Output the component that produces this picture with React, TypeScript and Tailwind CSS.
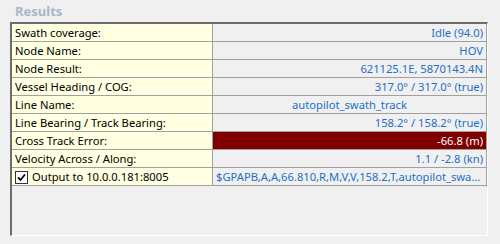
import React from "react";

type Row = {
  label: string;
  value: string;
  align?: "right" | "center" | "left";
  alert?: boolean;
  check?: boolean;
};

const rows: Row[] = [
  { label: "Swath coverage:", value: "Idle (94.0)" },
  { label: "Node Name:", value: "HOV" },
  { label: "Node Result:", value: "621125.1E, 5870143.4N" },
  { label: "Vessel Heading / COG:", value: "317.0° / 317.0° (true)" },
  { label: "Line Name:", value: "autopilot_swath_track", align: "center" },
  { label: "Line Bearing / Track Bearing:", value: "158.2° / 158.2° (true)" },
  { label: "Cross Track Error:", value: "-66.8 (m)", alert: true },
  { label: "Velocity Across / Along:", value: "1.1 / -2.8 (kn)" },
  {
    label: "Output to 10.0.0.181:8005",
    value: "$GPAPB,A,A,66.810,R,M,V,V,158.2,T,autopilot_swath_track,158.2,T,158.2,T*3C",
    align: "left",
    check: true,
  },
];

const Checkbox = () => (
  <span className="mr-[4px] flex h-[13px] w-[13px] shrink-0 items-center justify-center border border-[#333] bg-white">
    <svg width="9" height="9" viewBox="0 0 9 9">
      <path d="M1 4.5 L3.5 7 L8 1.5" stroke="#000" strokeWidth="1.8" fill="none" />
    </svg>
  </span>
);

const App = () => {
  return (
    <div
      className="h-[244px] w-[500px] overflow-hidden bg-[#f0f0f0] text-[11.2px]"
      style={{ fontFamily: '"Noto Sans", "Open Sans", sans-serif' }}
    >
      <div className="pl-[15px] pt-[3px] text-[13px] font-bold leading-[17px] text-[#a8b6ca]">
        Results
      </div>

      {/* 결과 그리드 */}
      <div className="ml-[10px] mt-[2px] h-[214px] w-[478px] border-b border-l-2 border-r border-t-2 border-b-white border-l-[#6d6d6d] border-r-white border-t-[#6d6d6d]">
        <div className="grid grid-cols-[201px_274px]">
          {rows.map((r) => (
            <React.Fragment key={r.label}>
              <div className="flex h-[18px] items-center overflow-hidden whitespace-nowrap border-b border-r border-[#a0a0a0] bg-[#ffffe1] pl-[3px] pt-[1px] leading-[16px] text-black">
                {r.check && <Checkbox />}
                {r.label}
              </div>
              <div
                className={
                  "h-[18px] overflow-hidden text-ellipsis whitespace-nowrap border-b border-r border-[#a0a0a0] px-[3px] pt-[1px] leading-[16px] " +
                  (r.alert ? "bg-[#800000] text-white " : "bg-[#f0f0f0] text-[#1e6fc8] ") +
                  (r.align === "center" ? "text-center" : r.align === "left" ? "text-left" : "text-right")
                }
              >
                {r.value}
              </div>
            </React.Fragment>
          ))}
        </div>
      </div>
    </div>
  );
};

export default App;
